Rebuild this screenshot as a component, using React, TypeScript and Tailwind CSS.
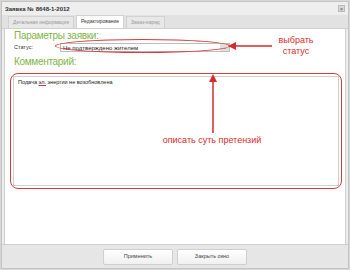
export default function App() {
  return (
    <div className="relative w-[350px] h-[270px] bg-[#d6d6d6] p-[1px] font-['Liberation_Sans',sans-serif] overflow-hidden">
      <div className="flex flex-col w-full h-full bg-[#ececec] border border-[#c4c4c4]">
        {/* title bar */}
        <div className="flex items-center justify-between h-[13px] px-[3px] bg-[#eeeeee]">
          <span className="text-[6px] font-bold text-[#333] leading-none">Заявка № 8648-1-2012</span>
          <span className="flex items-center justify-center w-[7px] h-[7px] bg-[#d8d8d8] border border-[#bbb] text-[6px] leading-none text-[#666]">×</span>
        </div>
        {/* tabs */}
        <div className="flex items-end h-[14px] px-[6px] gap-[2px] bg-[#e2e2e2] border-b border-[#d0d0d0]">
          <div className="flex items-center h-[12px] px-[4px] bg-[#e8e8e8] border border-b-0 border-[#d2d2d2] text-[5px] text-[#9a9a9a]">Детальная информация</div>
          <div className="flex items-center h-[13px] px-[4px] bg-white border border-b-0 border-[#d2d2d2] text-[5px] text-[#333]">Редактирование</div>
          <div className="flex items-center h-[12px] px-[4px] bg-[#e8e8e8] border border-b-0 border-[#d2d2d2] text-[5px] text-[#9a9a9a]">Заказ-наряд</div>
        </div>
        {/* content */}
        <div className="flex-1 flex flex-col mx-[2px] bg-white border-x border-[#d0d0d0] px-[9px] pt-[1px]">
          <div className="text-[10px] leading-[12px] tracking-[-0.3px] text-[#7fb548]">Параметры заявки:</div>
          <div className="flex items-center h-[11px]">
            <span className="w-[46px] text-[5.5px] text-[#333]">Статус:</span>
            <div className="flex items-center justify-between w-[170px] h-[9px] border border-[#bdbdbd] bg-white">
              <span className="pl-[2px] text-[6px] text-[#222] leading-none">Не подтверждено жителем</span>
              <span className="flex items-center justify-center w-[9px] h-[7px] bg-[#e0e0e0] text-[5px] text-[#555] leading-none">⌄</span>
            </div>
          </div>
          <div className="text-[10px] leading-[12px] tracking-[-0.3px] text-[#7fb548] mt-[3px]">Комментарий:</div>
          <div className="mt-[5px] w-[332px] h-[116px] -ml-[4px] border-[1.5px] border-[#d93a3a] rounded-[8px] p-[2px]">
            <div className="w-full h-full border border-[#cfcfcf] px-[4px] pt-[3px] text-[5.5px] text-[#222] leading-none">
              Подача <span className="underline decoration-[#d93a3a]">эл.</span> энергии не возобновлена
            </div>
          </div>
        </div>
        {/* footer */}
        <div className="flex items-center justify-center gap-[4px] h-[24px] bg-[#e6e6e6] border-t border-[#cfcfcf]">
          <button className="w-[70px] h-[16px] bg-gradient-to-b from-white to-[#f0f0f0] border border-[#cfcfcf] rounded-[2px] text-[5.5px] text-[#444]">Применить</button>
          <button className="w-[70px] h-[16px] bg-gradient-to-b from-white to-[#f0f0f0] border border-[#cfcfcf] rounded-[2px] text-[5.5px] text-[#444]">Закрыть окно</button>
        </div>
      </div>

      {/* annotations */}
      <div className="absolute left-[55px] top-[39px] w-[175px] h-[14px] border-[1.5px] border-[#d93a3a] rounded-[50%]" />
      <svg className="absolute left-[226px] top-[40px]" width="50" height="12" viewBox="0 0 50 12">
        <line x1="8" y1="6" x2="46" y2="6" stroke="#d62b2b" strokeWidth="1.5" />
        <polygon points="2,6 10,2 10,10" fill="#d62b2b" />
      </svg>
      <div className="absolute left-[276px] top-[35px] w-[40px] text-center text-[9px] leading-[11px] text-[#d62b2b]">выбрать<br />статус</div>
      <svg className="absolute left-[207px] top-[72px]" width="12" height="62" viewBox="0 0 12 62">
        <line x1="6" y1="8" x2="6" y2="61" stroke="#d62b2b" strokeWidth="1.5" />
        <polygon points="6,2 2,10 10,10" fill="#d62b2b" />
      </svg>
      <div className="absolute left-[150px] top-[135px] w-[124px] text-center text-[9px] leading-[11px] text-[#d62b2b]">описать суть претензий</div>
    </div>
  )
}
